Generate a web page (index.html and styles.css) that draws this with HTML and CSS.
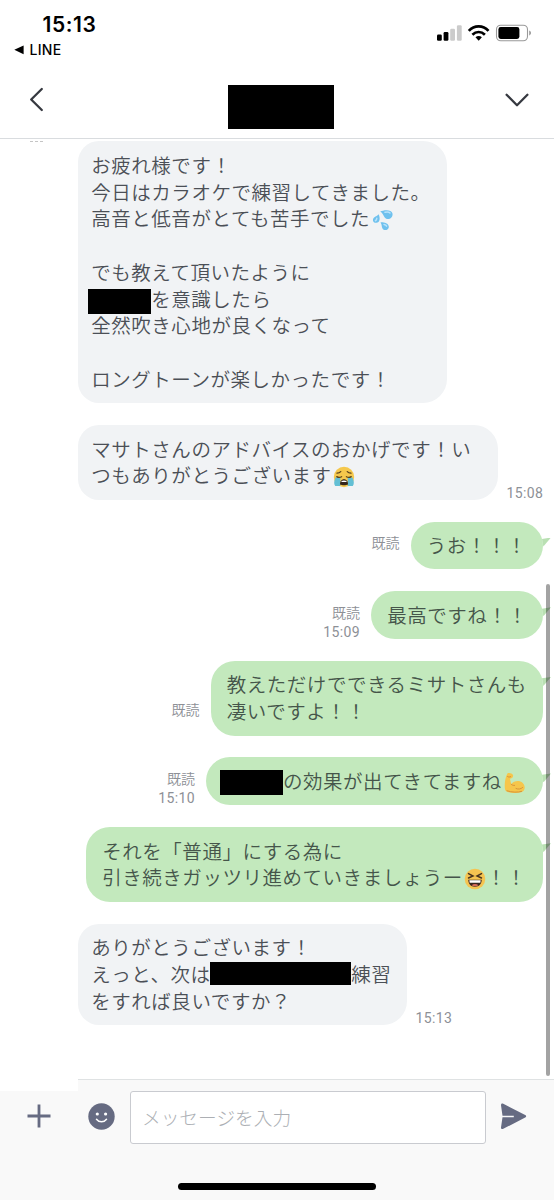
FILE: index.html
```
<!DOCTYPE html>
<html lang="ja">
<head>
<meta charset="utf-8">
<title>LINE</title>
<link rel="stylesheet" href="styles.css">
</head>
<body>
<div class="phone">
  <header class="top">
    <div class="status">
      <div class="status-left">
        <div class="clock">15:13</div>
        <div class="back-app"><svg width="10" height="10" viewBox="0 0 10 10"><path d="M9.6 .4v8.8L.3 4.8z"/></svg><span>LINE</span></div>
      </div>
      <svg class="status-icons" width="96" height="18" viewBox="0 0 96 18">
        <rect x="1" y="10.6" width="4.8" height="6.2" rx="1.2"/>
        <rect x="7.6" y="8" width="4.8" height="8.8" rx="1.2"/>
        <rect x="14.2" y="4.7" width="4.8" height="12.1" rx="1.2" fill="#cbcbcb"/>
        <rect x="20.9" y="1.2" width="4.8" height="15.6" rx="1.2" fill="#cbcbcb"/>
        <g fill="none" stroke="#000" stroke-width="2.7"><path d="M32.8 6.8C38.3.9 47 .9 52.5 6.8"/><path d="M36.4 10.7c3.7-3.6 8.8-3.6 12.5 0"/></g>
        <path d="M39.5 13.2c1.8-1.6 4.6-1.6 6.4 0l-3.2 3.5z"/>
        <rect x="60.5" y="1.2" width="31" height="15.6" rx="4.2" fill="#fff" stroke="#999" stroke-width="1.1"/>
        <rect x="62.4" y="3.1" width="21" height="11.8" rx="2.3"/>
        <path d="M93.2 6.6c2.4.8 2.4 4 0 4.8z" fill="#999"/>
      </svg>
    </div>
    <nav class="nav">
      <svg width="15" height="25" viewBox="0 0 15 25"><path d="M12.8 2 2.2 12.5 12.8 23" class="chev"/></svg>
      <div class="title-mask"></div>
      <svg width="24" height="15" viewBox="0 0 24 15"><path d="M1.6 1.8 12 12.2 22.4 1.8" class="chev"/></svg>
    </nav>
  </header>

  <main class="chat">
    <div class="date-edge"><i></i><i></i><i></i></div>
    <div class="row"><div class="bubble in w1">お疲れ様です！<br>今日はカラオケで練習してきました。<br>高音と低音がとても苦手でした<svg class="emoji" viewBox="0 0 22 22"><g fill="#6fc1ee"><path d="M8.2 2.5C12 .6 19.6.2 20.5 4.4c.7 4-3.3 6.800-6.300 5.300C11.500 8.300 11.500 4.500 8.200 2.500z"/><path d="M6.500 5.200c2 3.500 1.500 8.400-2.100 8.600C.5 14 0 9.900 2.400 8.200 4 7.100 5.400 6.800 6.500 5.200z"/><path d="M8.500 13.400c3-.2 8 .6 8.300 4.300.2 3.500-4.800 4.500-6.300 1.800-1.100-2-.4-4-2-6.100z"/></g><g fill="none" stroke="#b9e3fb" stroke-width="1.500" stroke-linecap="round"><path d="M13 3.200c2-.5 4-.4 5 .8M4.800 9.300c0 1-.5 2-1.400 2.400M12 15.400c1.300.3 2.200.8 2.600 1.700"/></g></svg><br><br>でも教えて頂いたように<br><span class="mask m1"></span>を意識したら<br>全然吹き心地が良くなって<br><br>ロングトーンが楽しかったです！</div></div>

    <div class="row"><div class="bubble in w2">マサトさんのアドバイスのおかげです！い<br>つもありがとうございます<svg class="emoji" viewBox="0 0 22 22"><circle cx="11" cy="11" r="10.200" fill="#f5c84c"/><path d="M2.600 11.500h4.700v8.600H2.200C.6 18 1 15 2.600 11.500zM14.700 11.500h4.700c1.700 3.500 2 6.500.4 8.600h-5.100z" fill="#63bfd4"/><g fill="none" stroke="#5a421c" stroke-width="1.300" stroke-linecap="round"><path d="M3.800 10.600c1.500 1 3.200 1 4.800.1M13.400 10.700c1.600.9 3.300.9 4.800-.1M4 7.200c1.500-.1 2.800-.6 3.700-1.600M18 7.200c-1.500-.1-2.800-.6-3.700-1.600"/></g><path d="M7 18.500c0-3 1.300-5.300 4-5.300s4 2.300 4 5.300c-2 1-6 1-8 0z" fill="#33251c"/><path d="M8.500 15c1-.7 4-.7 5 0v1h-5z" fill="#fff"/></svg></div><div class="meta">15:08</div></div>

    <div class="row me"><div class="meta mid"><span class="read">既読</span></div><div class="bubble out w3">うお！！！</div></div>
    <div class="row me"><div class="meta"><span class="read">既読</span><br>15:09</div><div class="bubble out w4">最高ですね！！</div></div>
    <div class="row me"><div class="meta mid"><span class="read">既読</span></div><div class="bubble out w5">教えただけでできるミサトさんも<br>凄いですよ！！</div></div>
    <div class="row me"><div class="meta"><span class="read">既読</span><br>15:10</div><div class="bubble out w6"><span class="mask m2"></span>の効果が出てきてますね<svg class="emoji arm" viewBox="0 0 22 22"><path d="M3.400 1.400c1.600-.9 5 0 5.600 1.600.4 1.500-.3 3-1.700 3.300L6 6.800l1.200 5.400c2.600-3.600 8.300-4.300 11.500-1.300 3.200 3.200 2.500 8-1.500 9.400-5 1.500-13 .6-15.300-1.300C0 17 .3 7 3.400 1.400z" fill="#f6c64b"/><path d="M3.500 4.500c1 .8 2 .7 3.200.2M7.200 12.200c1 1 2 1.400 3.400 1.200M3 18.800c5 1.700 11 1.700 14.600.6M12 16.500c2.500 1.200 5 .5 6.600-1" fill="none" stroke="#d7943b" stroke-width="1" stroke-linecap="round"/></svg></div></div>
    <div class="row me"><div class="bubble out w7">それを「普通」にする為に<br>引き続きガッツリ進めていきましょうー<svg class="emoji" viewBox="0 0 22 22"><circle cx="11" cy="11" r="10.300" fill="#f5c451"/><path d="M4.500 5.600 9 8 4.500 10M17.500 5.600 13 8l4.500 2" fill="none" stroke="#49351f" stroke-width="1.500" stroke-linecap="round"/><path d="M4.300 11.800h13.400c0 4.200-2.500 7-6.700 7s-6.700-2.800-6.700-7z" fill="#38251e"/><path d="M5.300 12.300h11.400l-.4 2.500H5.700z" fill="#fff"/><path d="M7.500 17.200c2-1.500 5-1.500 7 0-2 1.500-5 1.500-7 0z" fill="#d76b5b"/></svg>！！</div></div>

    <div class="row"><div class="bubble in w8">ありがとうございます！<br>えっと、次は<span class="mask m3"></span>練習<br>をすれば良いですか？</div><div class="meta">15:13</div></div>
    <div class="scrollbar"></div>
  </main>

  <footer class="composer">
    <div class="corner"></div>
    <div class="tools">
      <svg class="plus" width="24" height="24" viewBox="0 0 24 24"><path d="M12 .5v23M.5 12h23" stroke="#666b82" stroke-width="2.800"/></svg>
      <svg class="smile" width="27" height="27" viewBox="0 0 27 27"><circle cx="13.500" cy="13.500" r="13.200" fill="#666b82"/><circle cx="9.300" cy="11" r="1.600" fill="#fff"/><circle cx="17.600" cy="11" r="1.600" fill="#fff"/><path d="M8.500 16.300c2.400 3.300 7.600 3.300 10 0" fill="none" stroke="#fff" stroke-width="1.500" stroke-linecap="round"/></svg>
      <div class="field">メッセージを入力</div>
      <svg class="send" width="27" height="27" viewBox="0 0 27 27"><path d="M1 2.200C1 .6 2 .2 3.300.8l21.900 11.300c1.300.7 1.300 1.800 0 2.500L3.300 25.800C2 26.400 1 26 1 24.500l1.500-10.300h11.300v-1.500H2.500z" fill="#666b82"/></svg>
    </div>
    <div class="home"></div>
  </footer>
</div>
</body>
</html>
```
FILE: styles.css
```
* { box-sizing: border-box; }
body { margin: 0; background: #fff; }
svg { display: block; flex: none; }
.phone {
  width: 554px; height: 1200px; overflow: hidden;
  display: flex; flex-direction: column;
  font-family: "Noto Sans CJK JP", sans-serif;
}

.top { height: 139px; flex: none; border-bottom: 1px solid #d9dcdf; }
.status { display: flex; justify-content: space-between; height: 70px; padding: 13px 24px 0 14px; color: #000; }
.clock { margin-left: 28.5px; font: 600 21px/24px Inter, sans-serif; letter-spacing: .6px; }
.back-app { display: flex; align-items: center; gap: 5.5px; margin-top: 4px; font: 500 14px/18px Inter, sans-serif; letter-spacing: .3px; }
.status-icons { margin-top: 11px; margin-right: -2px; }
.nav { display: flex; justify-content: space-between; padding: 15px 25px 0 29px; }
.nav > svg:first-child { margin-top: 2px; }
.nav > svg:last-child { margin-top: 8px; }
.title-mask { width: 106px; height: 44px; background: #000; margin-left: 12px; }
.chev { fill: none; stroke: #363940; stroke-width: 2.3; stroke-linecap: round; stroke-linejoin: round; }

.chat {
  position: relative; height: 940px; flex: none;
  display: flex; flex-direction: column; gap: 21.9px;
  padding: 2.4px 11px 0 78px;
}
.date-edge { position: absolute; left: 30px; top: 2px; display: flex; gap: 2px; }
.date-edge i { width: 3px; height: 1px; background: #c5c5c5; }
.row { display: flex; align-items: flex-end; gap: 8.500px; }
.me { justify-content: flex-end; gap: 11px; }
.bubble {
  position: relative; flex: none; padding: 10.400px 0 10.700px 13.250px;
  border-radius: 24px; white-space: nowrap;
  font-size: 19.500px; letter-spacing: .530px; line-height: 26.750px; font-weight: 350; color: #4b4f56;
}
.in { background: #f1f3f5; border-radius: 21px 24px 24px 21px; }
.out { background: #c3e9bd; padding-left: 16.250px; color: #45554a; }
.out::after {
  content: ""; position: absolute; left: calc(100% - 1px); top: 16px;
  width: 9px; height: 9px; background: #b9e0b3;
  clip-path: polygon(0 15%, 100% 0, 15% 100%);
}
.w1 { width: 369px; }
.w2 { width: 420px; }
.w3 { width: 132.500px; }
.w4 { width: 172px; }
.w5 { width: 332.500px; }
.w6 { width: 337px; padding-left: 13.500px; }
.w7 { width: 457px; }
.w8 { width: 329px; }
.mask { display: inline-block; background: #000; vertical-align: top; }
.m1 { width: 63px; height: 25px; margin: 3px 0 -2px -3px; }
.m2 { width: 63.500px; height: 25px; margin: 2.500px 0 -1.500px 0; }
.m3 { width: 141px; height: 23px; margin: 1px 0 0 -.5px; }
.emoji { display: inline-block; width: 22px; height: 22px; margin: 4px 0 -2px 1.500px; vertical-align: top; }
.arm { margin-left: 2.500px; }
.meta {
  color: #8d9096; text-align: right;
  font: 400 14px/19px Roboto, "Noto Sans CJK JP", sans-serif;
  letter-spacing: .4px;
  margin-bottom: -3px;
}
.read { font-weight: 350; letter-spacing: 0; }
.me .mid { margin-bottom: 16px; }
.scrollbar { position: absolute; left: 546px; top: 445px; width: 4px; height: 492px; border-radius: 2px; background: rgba(0,0,0,.36); }

.composer { position: relative; flex: 1; background: #f9f9f9; border-top: 1px solid #dfe2e3; }
.corner { position: absolute; left: 0; top: -1px; width: 78px; height: 12px; background: #fff; }
.tools { display: flex; align-items: center; padding: 11px 0 0 27px; height: 64px; }
.smile { margin-left: 37px; margin-top: -3px; }
.plus, .send { margin-top: -3px; }
.field {
  width: 356px; height: 53px; margin: 0 14px 0 15px; padding-left: 11px;
  border: 1px solid #c9cbd0; border-radius: 3px; background: #fff;
  font-size: 18.700px; line-height: 49px; font-weight: 300; color: #acafb4;
}
.home { width: 198px; height: 7px; margin: 38.500px 0 0 178px; border-radius: 4px; background: #000; }
```
